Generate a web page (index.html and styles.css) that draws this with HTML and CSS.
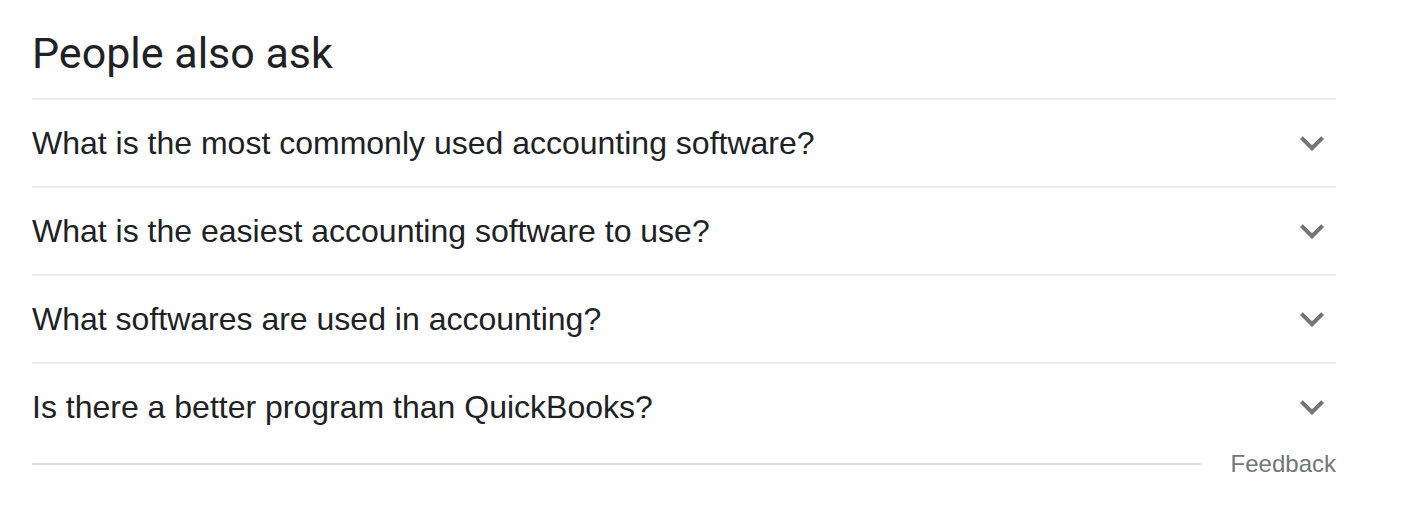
FILE: index.html
```html
<!DOCTYPE html>
<html>
<head>
<meta charset="utf-8">
<link rel="stylesheet" href="styles.css">
</head>
<body>
<div class="paa">
  <h2 class="paa-title">People also ask</h2>
  <div class="paa-list">
    <div class="paa-row">
      <span class="paa-q">What is the most commonly used accounting software?</span>
      <svg class="chev" viewBox="0 0 24 24"><path d="M16.59 8.59L12 13.17 7.41 8.59 6 10l6 6 6-6z"/></svg>
    </div>
    <div class="paa-row">
      <span class="paa-q">What is the easiest accounting software to use?</span>
      <svg class="chev" viewBox="0 0 24 24"><path d="M16.59 8.59L12 13.17 7.41 8.59 6 10l6 6 6-6z"/></svg>
    </div>
    <div class="paa-row">
      <span class="paa-q">What softwares are used in accounting?</span>
      <svg class="chev" viewBox="0 0 24 24"><path d="M16.59 8.59L12 13.17 7.41 8.59 6 10l6 6 6-6z"/></svg>
    </div>
    <div class="paa-row">
      <span class="paa-q">Is there a better program than QuickBooks?</span>
      <svg class="chev" viewBox="0 0 24 24"><path d="M16.59 8.59L12 13.17 7.41 8.59 6 10l6 6 6-6z"/></svg>
    </div>
  </div>
  <div class="paa-foot">
    <div class="foot-line"></div>
    <span class="feedback">Feedback</span>
  </div>
</div>
</body>
</html>
```
FILE: styles.css
```css
html, body {
  margin: 0;
  padding: 0;
  background: #fff;
}
.paa {
  width: 1304px;
  padding-left: 32px;
  padding-top: 0;
  font-family: "Liberation Sans", Arial, sans-serif;
}
.paa-title {
  margin: 0;
  height: 98px;
  box-sizing: border-box;
  padding-top: 25px;
  font-family: Roboto, "Noto Sans", sans-serif;
  font-weight: 400;
  font-size: 43px;
  line-height: 56px;
  color: #202124;
}
.paa-row {
  display: flex;
  align-items: center;
  justify-content: space-between;
  height: 88px;
  box-sizing: border-box;
  border-top: 2px solid #ebebeb;
}
.paa-q {
  font-size: 32px;
  line-height: 40px;
  color: #202124;
}
.chev {
  width: 48px;
  height: 48px;
  fill: #70757a;
  flex: none;
}
.paa-foot {
  display: flex;
  align-items: center;
  height: 24px;
  margin-top: 2px;
}
.foot-line {
  flex: 1;
  height: 0;
  border-top: 2px solid #dadce0;
  margin-right: 30px;
}
.feedback {
  font-size: 24px;
  color: #70757a;
  line-height: 24px;
}
```
